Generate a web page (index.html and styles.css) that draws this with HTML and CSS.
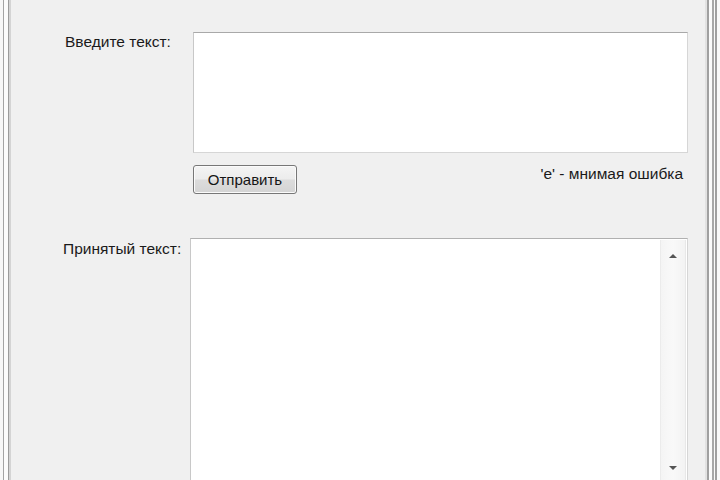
FILE: index.html
```html
<!DOCTYPE html>
<html lang="ru">
<head>
<meta charset="utf-8">
<link rel="stylesheet" href="styles.css">
</head>
<body>
<div class="window">
  <div class="form">
    <div class="row row-input">
      <div class="label">Введите текст:</div>
      <div class="field">
        <div class="textbox"></div>
        <div class="actions">
          <button class="btn" type="button">Отправить</button>
          <span class="note">'е' - мнимая ошибка</span>
        </div>
      </div>
    </div>
    <div class="row row-output">
      <div class="label">Принятый текст:</div>
      <div class="textbox big">
        <div class="content"></div>
        <div class="scrollbar">
          <span class="arrow up"></span>
          <span class="arrow down"></span>
        </div>
      </div>
    </div>
  </div>
</div>
</body>
</html>
```
FILE: styles.css
```css
* { box-sizing: border-box; }
html, body {
  margin: 0;
  width: 720px;
  height: 480px;
  overflow: hidden;
  background: #f0f0f0;
}
.window {
  width: 720px;
  height: 480px;
  background: #f0f0f0;
  box-shadow:
    inset 3px 0 0 #f8f8f8,
    inset 4px 0 0 #a4a4a4,
    inset 8px 0 0 #fcfcfc,
    inset 9px 0 0 #9c9c9c,
    inset 11px 0 0 #d4d4d4,
    inset -3px 0 0 #fafafa,
    inset -5px 0 0 #a0a0a0,
    inset -6px 0 0 #fbfbfb,
    inset -8px 0 0 #a8a8a8,
    inset -11px 0 0 #fbfbfb,
    inset -13px 0 0 #a0a0a0,
    inset -15px 0 0 #e2e2e2;
  font-family: "Liberation Sans", Arial, sans-serif;
  font-size: 15.5px;
  color: #1a1a1a;
}
.form {
  display: flex;
  flex-direction: column;
  padding: 32px 32px 0 65px;
}
.row {
  display: flex;
}
.label {
  width: 128px;
  flex: none;
  line-height: 18px;
  padding-top: 1px;
}
.field {
  flex: 1;
  display: flex;
  flex-direction: column;
}
.textbox {
  background: #ffffff;
  border: 1px solid #d6d6d6;
  border-top-color: #a9a9a9;
  border-left-color: #c8c8c8;
  height: 121px;
}
.actions {
  display: flex;
  justify-content: space-between;
  align-items: flex-start;
  margin-top: 12px;
}
.btn {
  width: 104px;
  height: 29px;
  border: 1px solid #777777;
  border-radius: 3px;
  background: linear-gradient(#f4f4f4 0%, #ececec 48%, #dcdcdc 52%, #d4d4d4 100%);
  font-family: "Liberation Sans", Arial, sans-serif;
  font-size: 15px;
  color: #151515;
  padding: 0 0 1px 0;
  box-shadow: inset 0 0 0 1px #fbfbfb;
}
.note {
  margin-right: 5px;
}
.row-output {
  margin-top: 44px;
}
.row-output .label {
  margin-left: -2px;
  width: 127px;
  padding-top: 2px;
}
.textbox.big {
  flex: 1;
  height: 244px;
  display: flex;
  border-top-color: #b0b0b0;
}
.content { flex: 1; }
.scrollbar {
  width: 26px;
  background: linear-gradient(90deg, #f4f4f4, #f9f9f9 50%, #f3f3f3);
  border-left: 1px solid #ebebeb;
  border-right: 1px solid #e8e8e8;
  display: flex;
  flex-direction: column;
  justify-content: space-between;
  align-items: center;
  padding: 14px 0 11px 0;
  margin: 1px 1px 0 0;
}
.arrow {
  width: 0;
  height: 0;
  border-left: 4px solid transparent;
  border-right: 4px solid transparent;
}
.arrow.up { border-bottom: 4px solid #555; }
.arrow.down { border-top: 4px solid #555; }
```
